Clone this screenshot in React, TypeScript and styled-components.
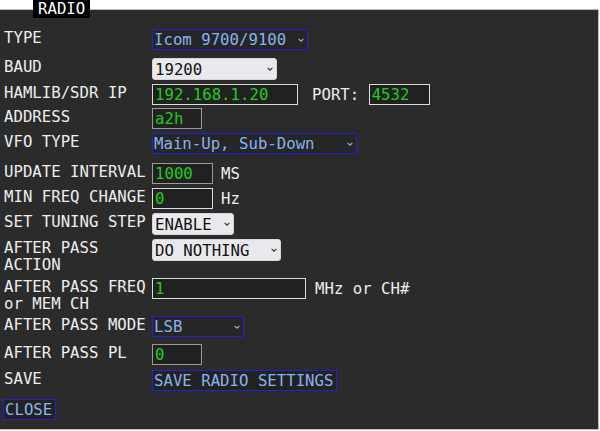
import React from "react";
import styled, { createGlobalStyle } from "styled-components";

const FONT = `"DejaVu Sans Mono", "Liberation Mono", monospace`;

const chevron = (color: string) =>
  `url("data:image/svg+xml;utf8,<svg xmlns='http://www.w3.org/2000/svg' width='6' height='4' viewBox='0 0 6 4'><path d='M0.6 0.8 L3 3.2 L5.4 0.8' fill='none' stroke='${encodeURIComponent(
    color
  )}' stroke-width='1.1'/></svg>")`;

const Global = createGlobalStyle`
  html, body { margin: 0; padding: 0; background: #ffffff; }
  body { font-family: ${FONT}; font-size: 15.7px; }
  * { box-sizing: border-box; }
`;

const Panel = styled.fieldset`
  margin: 0;
  padding: 0 0 9px 0;
  width: 599px;
  background: #2b2b2b;
  border: 1px solid #bdbdbd;
  border-left: none;
  min-inline-size: 0;
`;

const Legend = styled.legend`
  margin-left: 33px;
  padding: 0 5px;
  background: #000;
  color: #fff;
  font-family: ${FONT};
  font-size: 15.7px;
  line-height: 18px;
`;

const Content = styled.div`
  display: flex;
  flex-direction: column;
  padding-top: 11px;
`;

const Row = styled.div<{ $h: number }>`
  display: flex;
  align-items: flex-start;
  height: ${(p) => p.$h}px;
`;

const Label = styled.div`
  width: 152px;
  flex: none;
  padding-left: 4px;
  padding-top: 1px;
  color: #eeeeee;
  font-size: 15.7px;
  line-height: 16.6px;
  white-space: pre-line;
`;

const Value = styled.div`
  display: flex;
  align-items: baseline;
`;

const Unit = styled.span<{ $gap: number }>`
  margin-left: ${(p) => p.$gap}px;
  color: #eeeeee;
  font-size: 15.7px;
  white-space: pre;
`;

const TextBox = styled.input<{ $w: number; $bright?: boolean }>`
  width: ${(p) => p.$w}px;
  height: 21px;
  margin: 0;
  padding: 0 2px;
  background: #212121;
  color: #22cc22;
  border: 1px solid ${(p) => (p.$bright ? "#dcdcdc" : "#9a9a9a")};
  border-radius: 0;
  font-family: ${FONT};
  font-size: 15.7px;
  outline: none;
`;

const DarkSelect = styled.select<{ $w: number }>`
  appearance: none;
  -webkit-appearance: none;
  width: ${(p) => p.$w}px;
  height: 21px;
  margin: 0;
  padding: 0 0 0 1px;
  background-color: #262626;
  background-image: ${chevron("#88b4ec")};
  background-repeat: no-repeat;
  background-position: right 3px center;
  color: #88b4ec;
  border: 1px solid #2222d2;
  border-radius: 0;
  font-family: ${FONT};
  font-size: 15.7px;
`;

const LightSelect = styled.select<{ $w: number }>`
  appearance: none;
  -webkit-appearance: none;
  width: ${(p) => p.$w}px;
  height: 22px;
  margin: 0;
  padding: 0 0 0 2px;
  background-color: #e9e9ed;
  background-image: ${chevron("#333333")};
  background-repeat: no-repeat;
  background-position: right 3px center;
  color: #111;
  border: 1px solid #d6d6da;
  border-radius: 3px;
  font-family: ${FONT};
  font-size: 15.7px;
`;

const BlueButton = styled.button<{ $w: number }>`
  width: ${(p) => p.$w}px;
  height: 21px;
  margin: 0;
  padding: 0 1px;
  background: #222222;
  color: #88b4ec;
  border: 1px solid #2222d2;
  border-radius: 0;
  font-family: ${FONT};
  font-size: 15.7px;
  text-align: left;
  white-space: nowrap;
  cursor: pointer;
`;

const CloseRow = styled.div`
  display: flex;
  padding-left: 3px;
`;

export default function App() {
  return (
    <>
      <Global />
      <Panel>
        <Legend>RADIO</Legend>
        <Content>
          <Row $h={29}>
            <Label>TYPE</Label>
            <Value>
              <DarkSelect $w={156} defaultValue="icom">
                <option value="icom">Icom 9700/9100</option>
              </DarkSelect>
            </Value>
          </Row>
          <Row $h={26}>
            <Label>BAUD</Label>
            <Value>
              <LightSelect $w={125} defaultValue="19200">
                <option value="19200">19200</option>
              </LightSelect>
            </Value>
          </Row>
          <Row $h={24}>
            <Label>HAMLIB/SDR IP</Label>
            <Value>
              <TextBox $w={146} $bright defaultValue="192.168.1.20" />
              <Unit $gap={14}>PORT: </Unit>
              <TextBox $w={61} $bright defaultValue="4532" />
            </Value>
          </Row>
          <Row $h={25}>
            <Label>ADDRESS</Label>
            <Value>
              <TextBox $w={50} defaultValue="a2h" />
            </Value>
          </Row>
          <Row $h={30}>
            <Label>VFO TYPE</Label>
            <Value>
              <DarkSelect $w={205} defaultValue="mu">
                <option value="mu">Main-Up, Sub-Down</option>
              </DarkSelect>
            </Value>
          </Row>
          <Row $h={25}>
            <Label>UPDATE INTERVAL</Label>
            <Value>
              <TextBox $w={61} defaultValue="1000" />
              <Unit $gap={8}>MS</Unit>
            </Value>
          </Row>
          <Row $h={25}>
            <Label>MIN FREQ CHANGE</Label>
            <Value>
              <TextBox $w={61} $bright defaultValue="0" />
              <Unit $gap={8}>Hz</Unit>
            </Value>
          </Row>
          <Row $h={26}>
            <Label>SET TUNING STEP</Label>
            <Value>
              <LightSelect $w={82} defaultValue="en">
                <option value="en">ENABLE</option>
              </LightSelect>
            </Value>
          </Row>
          <Row $h={39}>
            <Label>{"AFTER PASS\nACTION"}</Label>
            <Value>
              <LightSelect $w={129} defaultValue="dn">
                <option value="dn">DO NOTHING</option>
              </LightSelect>
            </Value>
          </Row>
          <Row $h={38}>
            <Label>{"AFTER PASS FREQ\nor MEM CH"}</Label>
            <Value>
              <TextBox $w={154} $bright defaultValue="1" />
              <Unit $gap={9}>MHz or CH#</Unit>
            </Value>
          </Row>
          <Row $h={28}>
            <Label>AFTER PASS MODE</Label>
            <Value>
              <DarkSelect $w={92} defaultValue="lsb">
                <option value="lsb">LSB</option>
              </DarkSelect>
            </Value>
          </Row>
          <Row $h={26}>
            <Label>AFTER PASS PL</Label>
            <Value>
              <TextBox $w={50} defaultValue="0" />
            </Value>
          </Row>
          <Row $h={29}>
            <Label>SAVE</Label>
            <Value>
              <BlueButton $w={185}>SAVE RADIO SETTINGS</BlueButton>
            </Value>
          </Row>
          <CloseRow>
            <BlueButton $w={53}>CLOSE</BlueButton>
          </CloseRow>
        </Content>
      </Panel>
    </>
  );
}
